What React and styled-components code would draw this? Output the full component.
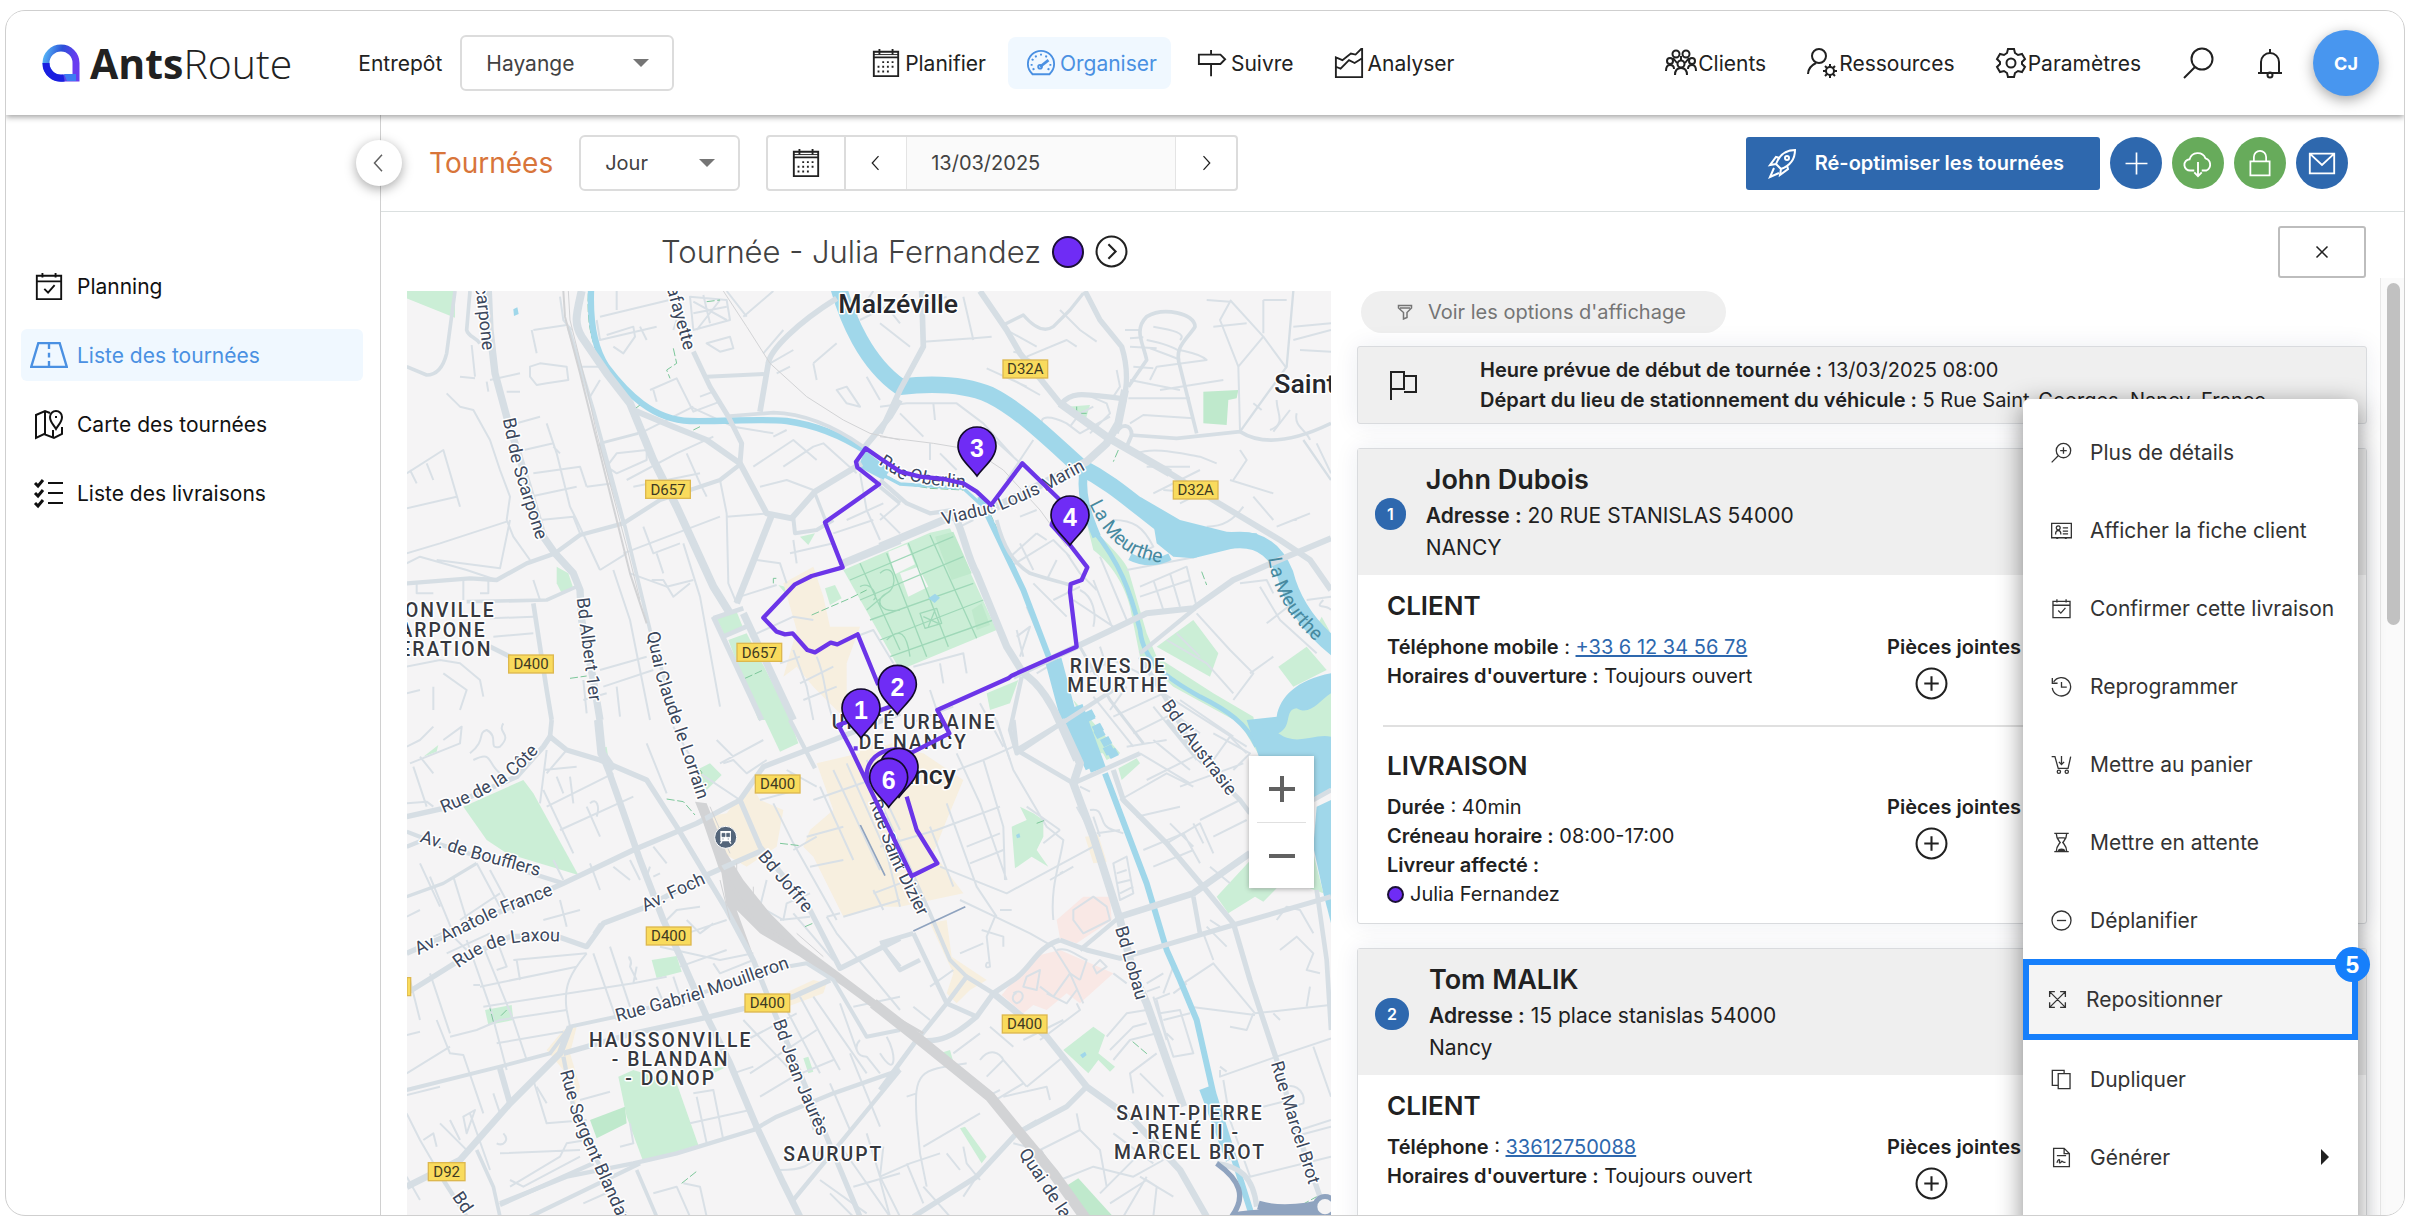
import React, { useState } from "react";
import styled, { createGlobalStyle } from "styled-components";

const GlobalStyle = createGlobalStyle`
  * {
    box-sizing: border-box;
  }
  body {
    margin: 0;
    background: #fff;
    color: #212121;
    font-family: Inter, "Open Sans", sans-serif;
    font-size: 20px;
  }
  button, input, select {
    font: inherit;
    color: inherit;
  }
  h1, h2, h3, h4, p, ul {
    margin: 0;
    padding: 0;
  }
  b {
    font-weight: 600;
  }
`;

/* ---------- icons ---------- */

const Svg = styled.svg`
  flex: none;
  width: ${(p) => p.$size || 32}px;
  height: ${(p) => p.$size || 32}px;
  fill: none;
  stroke: currentColor;
  stroke-width: ${(p) => p.$stroke || 2};
`;

const dots = (list) => list.map(([x, y]) => <path key={`${x}-${y}`} d={`M${x} ${y}h2`} />);

const shapes = {
  calendar: (
    <>
      <path d="M3 4h26v26H3zM3 10h26M9 1v6M23 1v6" />
      <path d="M3 7h26" strokeWidth="1" />
      {dots([
        [12, 15], [17, 15], [22, 15],
        [7, 20], [12, 20], [17, 20], [22, 20],
        [7, 25], [12, 25], [17, 25],
      ])}
    </>
  ),
  gauge: (
    <>
      <path d="M7 28h18c3-3 5-6 5-11a14 14 0 0 0-28 0c0 5 2 8 5 11z" />
      <path d="M15 20l9-7" strokeWidth="3" />
      <circle cx="15" cy="20" r="2" />
      <path d="M16 6v2M10 8l1 2M6 12l2 1M5 18h2M25 18h2M22 8l-1 2M7 23l2-1M25 23l-2-1" />
    </>
  ),
  sign: <path d="M2 7h23l5 5-5 5H2zM15 2v5M15 17v13" />,
  chart: <path d="M2 31V10l7 3 9-7 5 1 7-7v31zM2 20l5 2 9-9 6 3 8-5" />,
  clients: (
    <>
      <circle cx="11" cy="7" r="3.5" />
      <circle cx="21" cy="7" r="3.5" />
      <circle cx="5" cy="14" r="3" />
      <circle cx="27" cy="14" r="3" />
      <circle cx="16" cy="17" r="3.5" />
      <path d="M1 24c0-4 1-6 4-6s4 2 4 4M31 24c0-4-1-6-4-6s-4 2-4 4M10 28c0-5 2-7 6-7s6 2 6 7M8 11l4 5M24 11l-4 5M16 9v4" />
    </>
  ),
  resources: (
    <>
      <circle cx="13" cy="9" r="7" />
      <path d="M2 27c0-6 4-9 8-11" />
      <circle cx="24" cy="24" r="4" />
      <path d="M24 17v3M24 28v3M17 24h3M28 24h3M19 19l2 2M27 27l2 2M29 19l-2 2M21 27l-2 2" />
    </>
  ),
  gear: (
    <>
      <path d="M13 2h6l1 4 3 2 4-1 3 5-3 3v2l3 3-3 5-4-1-3 2-1 4h-6l-1-4-3-2-4 1-3-5 3-3v-2l-3-3 3-5 4 1 3-2z" />
      <circle cx="16" cy="16" r="4.5" />
    </>
  ),
  search: (
    <>
      <circle cx="19" cy="12" r="10.5" />
      <path d="M12 20L1 31" />
    </>
  ),
  bell: (
    <>
      <path d="M4 26h24M7 26V15a9 9 0 0 1 18 0v11M16 2v4" />
      <circle cx="16" cy="28" r="2.5" />
    </>
  ),
  left: <path d="M20 5L10 16l10 11" />,
  right: <path d="M12 5l10 11-10 11" />,
  rocket: (
    <>
      <path d="M10 17C13 9 19 3 29 3c0 10-6 16-14 19zM10 17l-6 1 6-8 4 1M15 22l-1 6 8-6-1-4" />
      <circle cx="21" cy="11" r="2" />
      <path d="M8 21l-4 9 9-4" />
    </>
  ),
  plus: <path d="M16 3v26M3 16h26" />,
  cloud: <path d="M12 24H8A6 6 0 0 1 7 12a9 9 0 0 1 17-1 7 7 0 0 1 1 13h-5M16 15v15M12 26l4 4 4-4" />,
  lock: <path d="M5 14h22v16H5zM9 14V9a7 7 0 0 1 14 0v5" />,
  mail: <path d="M3 6h26v21H3zM3 6l13 12L29 6" />,
  planning: <path d="M3 5h26v25H3zM3 11h26M9 2v5M23 2v5M11 19l4 4 7-8" />,
  road: <path d="M7 6h18l6 20H1zM16 6v5M16 14v4M16 21v5" />,
  mapPin: (
    <>
      <path d="M17 5l-5-2-9 4v23l8-4 10 4 8-4V19M12 4v22M20 22v8" />
      <path d="M23 21c-3-5-6-7-6-12a6 6 0 0 1 12 0c0 5-3 7-6 12z" />
      <path d="M22 9h2" />
    </>
  ),
  checklist: (
    <>
      <path d="M15 6h15M15 16h15M15 26h15" />
      <path d="M2 6l3 3 5-6M2 16l3 3 5-6M2 26l3 3 5-6" strokeWidth="3" />
    </>
  ),
  arrowCircle: (
    <>
      <circle cx="16" cy="16" r="14.5" />
      <path d="M13 9l7 7-7 7" />
    </>
  ),
  close: <path d="M5 5l22 22M27 5L5 27" />,
  funnel: <path d="M3 3h26v5l-9 9v10l-7 3V17L3 8zM6 8h20" />,
  flag: <path d="M4 31V3h13v17H4M17 7h12v16H17" />,
  plusCircle: (
    <>
      <circle cx="16" cy="16" r="14.5" />
      <path d="M16 9v14M9 16h14" />
    </>
  ),
  zoomIn: (
    <>
      <circle cx="19" cy="13" r="11" />
      <path d="M11 21L1 31M19 8v10M14 13h10" />
    </>
  ),
  card: <path d="M1 5h30v22H1zM7 22c0-8 8-8 8 0M18 12h8M18 17h8M18 21h8M8 28h3M21 28h3M11 9a3 3 0 1 0 .1 0z" />,
  history: <path d="M4 9a14 14 0 1 1-2 9M2 3v8h8M16 9v8h8" />,
  cart: (
    <>
      <path d="M1 4h5l5 18h15l4-18M16 3v12M12 12l4 4 4-4" />
      <circle cx="12" cy="27" r="2.5" />
      <circle cx="24" cy="27" r="2.5" />
    </>
  ),
  hourglass: (
    <>
      <path d="M5 2h22M5 30h22M8 2c0 8 3 10 6 14-3 4-6 6-6 14M24 2c0 8-3 10-6 14 3 4 6 6 6 14M11 9h10" />
      <path d="M11 29c1-4 9-4 10 0z" fill="currentColor" />
    </>
  ),
  minusCircle: (
    <>
      <circle cx="16" cy="16" r="14.5" />
      <path d="M9 16h14" />
    </>
  ),
  move: <path d="M4 4l24 24M28 4L4 28M4 12V4h8M20 4h8v8M28 20v8h-8M12 28H4v-8" />,
  copy: <path d="M11 7h18v23H11zM11 25H2V2h18v5" />,
  file: <path d="M4 2h16l8 8v20H4zM20 2v8h8M9 13h14M9 24c2-6 5-6 4-2s2 2 3 0 2 3 6 1" />,
};

const Icon = ({ name, size, stroke }) => (
  <Svg viewBox="0 0 32 32" $size={size} $stroke={stroke} aria-hidden="true">
    {shapes[name]}
  </Svg>
);

/* ---------- frame ---------- */

const Frame = styled.div`
  display: flex;
  flex-direction: column;
  height: calc(100vh - 20px);
  margin: 10px 5px;
  border: 1px solid #cfcfcf;
  border-radius: 20px;
  overflow: hidden;
`;

const Header = styled.header`
  display: flex;
  align-items: center;
  justify-content: space-between;
  flex: none;
  height: 104px;
  padding: 0 25px 0 36px;
  background: #fff;
  font-size: 21px;
  box-shadow: 0 2px 6px rgba(0, 0, 0, 0.38);
  z-index: 3;
`;

const Group = styled.div`
  display: flex;
  align-items: center;
  gap: ${(p) => p.$gap || 0}px;
`;

const Logo = styled.a`
  display: flex;
  align-items: center;
  gap: 10px;
  margin-right: 66px;
  color: #212121;
  font-family: "Open Sans", sans-serif;
  font-size: 41px;
  font-weight: 300;
  line-height: 40px;
  text-decoration: none;

  b {
    font-weight: 700;
  }
  svg {
    width: 38px;
    height: 38px;
  }
`;

const SelectLabel = styled.label`
  margin-right: 18px;
`;

const SelectBox = styled.div`
  position: relative;
  width: ${(p) => p.$width}px;

  &::after {
    content: "";
    position: absolute;
    top: 24px;
    right: 25px;
    border: 8px solid transparent;
    border-top-color: #757575;
    border-bottom: 0;
    pointer-events: none;
  }
`;

const Select = styled.select`
  appearance: none;
  width: 100%;
  height: 56px;
  padding: 0 24px;
  border: 2px solid #dcdcdc;
  border-radius: 6px;
  background: #fff;
  color: #424242;
`;

const NavLink = styled.a`
  display: flex;
  align-items: center;
  gap: ${(p) => (p.$tight ? 1 : 4)}px;
  height: 52px;
  padding: 0 14px 0 18px;
  border-radius: 8px;
  background: ${(p) => (p.$active ? "#f0f8ff" : "transparent")};
  color: ${(p) => (p.$active ? "#4a90e2" : "#212121")};
  text-decoration: none;
`;

const IconButton = styled.button`
  display: flex;
  align-items: center;
  justify-content: center;
  padding: 0;
  border: 0;
  background: none;
  cursor: pointer;
`;

const HeaderTools = styled(Group)`
  margin: 0 27px 0 28px;
`;

const Avatar = styled.button`
  width: 66px;
  height: 66px;
  border: 0;
  border-radius: 50%;
  background: #4896ef;
  color: #fff;
  font-size: 18px;
  font-weight: 700;
  box-shadow: 0 4px 14px rgba(0, 0, 0, 0.35);
`;

const Body = styled.div`
  display: flex;
  flex: 1;
  min-height: 0;
`;

const Sidebar = styled.nav`
  display: flex;
  flex-direction: column;
  flex: none;
  gap: 17px;
  width: 375px;
  padding: 145px 17px 0 15px;
  border-right: 1px solid #d0d0d0;
  font-size: 21px;
`;

const SideLink = styled.a`
  display: flex;
  align-items: center;
  gap: 9px;
  height: 52px;
  padding-left: 9px;
  border-radius: 6px;
  background: ${(p) => (p.$active ? "#f0f8ff" : "transparent")};
  color: ${(p) => (p.$active ? "#4a90e2" : "#111")};
  text-decoration: none;
`;

const SideIcon = styled.span`
  display: flex;
  justify-content: center;
  width: 38px;
`;

/* ---------- toolbar ---------- */

const Main = styled.main`
  position: relative;
  display: flex;
  flex: 1;
  flex-direction: column;
  min-width: 0;
`;

const Collapse = styled(IconButton)`
  position: absolute;
  top: 25px;
  left: -25px;
  width: 46px;
  height: 46px;
  border-radius: 50%;
  background: #fff;
  color: #616161;
  box-shadow: 0 3px 12px rgba(0, 0, 0, 0.35);
  z-index: 2;
`;

const Toolbar = styled.div`
  display: flex;
  align-items: center;
  justify-content: space-between;
  flex: none;
  height: 97px;
  padding: 0 56px 0 48px;
  border-bottom: 1px solid #dbe0e0;
`;

const PageTitle = styled.h1`
  color: #d8753a;
  font-size: 28px;
  font-weight: 400;
`;

const DateGroup = styled.div`
  display: flex;
  height: 56px;
  border: 2px solid #dcdcdc;
  border-radius: 4px;
  overflow: hidden;

  button {
    width: 60px;
  }
  button:first-child {
    width: 78px;
    border-right: 2px solid #dcdcdc;
  }
`;

const DateInput = styled.input`
  width: 270px;
  padding: 0 24px;
  border: solid #e4e4e4;
  border-width: 0 1px;
  background: #fafafa;
  color: #424242;
`;

const Primary = styled.button`
  display: flex;
  align-items: center;
  gap: 17px;
  height: 53px;
  padding: 0 36px 0 20px;
  border: 0;
  border-radius: 3px;
  background: #2e68ae;
  color: #fff;
  font-weight: 600;
`;

const Round = styled(IconButton)`
  width: 52px;
  height: 52px;
  border-radius: 50%;
  background: ${(p) => (p.$green ? "#67ab5b" : "#2e68ae")};
  color: #fff;
`;

/* ---------- route view ---------- */

const RouteView = styled.section`
  position: relative;
  display: flex;
  flex: 1;
  flex-direction: column;
  min-height: 0;
`;

const RouteHead = styled.div`
  display: flex;
  align-items: center;
  justify-content: space-between;
  flex: none;
  height: 66px;
  padding: 13px 38px 0 280px;
`;

const RouteTitle = styled.h2`
  color: #424242;
  font-size: 31px;
  font-weight: 300;
`;

const Dot = styled.span`
  display: inline-block;
  flex: none;
  width: ${(p) => p.$size}px;
  height: ${(p) => p.$size}px;
  border: 2px solid #1b1036;
  border-radius: 50%;
  background: #6f2cf5;
`;

const Close = styled(IconButton)`
  width: 88px;
  height: 52px;
  border: 2px solid #bdbdbd;
  border-radius: 3px;
`;

const Split = styled.div`
  display: grid;
  flex: 1;
  grid-template-columns: 924fr 1049fr 24px;
  min-height: 0;
  padding-left: 26px;
`;

const MapPane = styled.div`
  position: relative;
  min-height: 0;
  margin-top: 13px;
  background: #f5f4f5;
  overflow: hidden;

  > svg {
    display: block;
    width: 100%;
    height: 100%;
  }
`;

const ZoomControl = styled.div`
  position: absolute;
  right: 17px;
  bottom: 327px;
  display: flex;
  flex-direction: column;
  width: 65px;
  padding: 0 8px;
  background: #fff;
  color: #616161;
  box-shadow: 0 1px 5px rgba(0, 0, 0, 0.3);

  button {
    height: 66px;
  }
  button + button {
    border-top: 1px solid #e0e0e0;
  }
`;

const List = styled.div`
  display: flex;
  flex-direction: column;
  min-height: 0;
  padding: 13px 13px 0 26px;
  overflow: hidden;
`;

const Options = styled.button`
  display: flex;
  align-items: center;
  align-self: flex-start;
  flex: none;
  gap: 15px;
  height: 42px;
  margin: 0 0 13px 4px;
  padding: 0 40px 0 36px;
  border: 0;
  border-radius: 21px;
  background: #efefef;
  color: #757575;
`;

const Card = styled.article`
  flex: none;
  margin-bottom: 24px;
  border: 1px solid #d9dbde;
  border-radius: 3px;
  background: #fff;
  box-shadow: 0 0 24px rgba(30, 40, 90, 0.08);
`;

const Departure = styled(Card)`
  display: flex;
  align-items: center;
  gap: 61px;
  height: 78px;
  padding-left: 29px;
  background: #efefef;
  line-height: 30px;
  white-space: nowrap;
`;

const CardHead = styled.header`
  display: flex;
  align-items: center;
  gap: 20px;
  height: 126px;
  padding: 3px 17px 0;
  background: #efefef;
`;

const Badge = styled.span`
  flex: none;
  padding: 0 12px;
  border-radius: 16px;
  background: #2e68ae;
  color: #fff;
  font-size: 16px;
  font-weight: 600;
  line-height: 32px;
`;

const Name = styled.h3`
  margin-bottom: 3px;
  font-size: 27px;
  font-weight: 600;
  line-height: 34px;
`;

const Address = styled.p`
  width: 400px;
  font-size: 21px;
  line-height: 32px;
`;

const CardBody = styled.div`
  padding: 0 25px;
`;

const Section = styled.section`
  padding: ${(p) => (p.$first ? "14px 4px 25px" : "22px 4px 14px")};

  & + & {
    border-top: 2px solid #e0e0e0;
  }
`;

const SectionTitle = styled.h4`
  font-size: 26px;
  font-weight: 600;
  line-height: 34px;
`;

const Columns = styled.div`
  display: grid;
  grid-template-columns: 500px 1fr;
  margin-top: 10px;
  line-height: 29px;

  a {
    color: #2e68ae;
  }
`;

const Driver = styled.p`
  display: flex;
  align-items: center;
  gap: 6px;
`;

const AddFile = styled(IconButton)`
  margin: 5px 0 0 28px;
`;

const Track = styled.div`
  padding: 5px 4px 0 6px;
  border-left: 1px solid #e8e8e8;
  background: #fafafa;

  &::before {
    content: "";
    display: block;
    height: 342px;
    border-radius: 7px;
    background: #c1c1c1;
  }
`;

const Menu = styled.ul`
  position: absolute;
  top: 187px;
  right: 46px;
  width: 335px;
  padding: 14px 0 44px;
  border-radius: 6px;
  background: #fff;
  font-size: 21px;
  box-shadow: 0 6px 26px rgba(0, 0, 0, 0.45);
  list-style: none;
`;

const MenuItem = styled.li`
  position: relative;
  height: ${(p) => (p.$marked ? 81 : 78)}px;

  button {
    display: flex;
    align-items: center;
    gap: 18px;
    width: 100%;
    height: 100%;
    padding: 0 ${(p) => (p.$more ? 29 : 12)}px 0 ${(p) => (p.$marked ? 18 : 28)}px;
    border: ${(p) => (p.$marked ? "6px solid #167ffb" : "0")};
    background: ${(p) => (p.$marked ? "#f4f4f4" : "none")};
    color: #333;
    text-align: left;
    white-space: nowrap;
  }
`;

const Caret = styled.span`
  margin-left: auto;
  border: 8px solid transparent;
  border-left-color: #212121;
  border-right: 0;
`;

const Step = styled.span`
  position: absolute;
  top: -12px;
  right: -12px;
  width: 35px;
  border-radius: 50%;
  background: #167ffb;
  color: #fff;
  font-family: "Liberation Sans", sans-serif;
  font-size: 24px;
  font-weight: 700;
  line-height: 35px;
  text-align: center;
`;

/* ---------- map ---------- */

// The map is drawn from four tiles, each with its own origin in map units.
const tiles = [
  {
    at: [-21, -213],
    parks: [
      "M20 213h145v80L20 235z",
      "M470 1040l35 20 15 45-35 15-15-30z",
      "M950 1195l60-20 20 50-55 25z",
      "M985 1260l55-20 135 260h-100z",
      "M1275 1105l30-10 20 40-35 20z",
      "M1135 1095l20 5 10 30z",
      "M1200 950l45-10-20 35z",
    ],
    shops: ["M1150 1090l90-50 30 90 20 90 90 0-40 110 0 170-100-100-50-60-40 30 40-140z"],
    water: [["M573 213C570 300 580 380 620 440C680 520 760 600 870 603C980 605 1080 595 1160 603C1250 615 1330 650 1400 695", 19]],
    lakes: ["M1395 690l75 60-20 30-75-40z", "M340 268l12-6 4 20-14 6z"],
    roads: [
      ["M265 213L270 330L285 460L320 590L370 750L430 950L465 1000L520 1060L540 1110L545 1200L580 1380L600 1500", 22],
      ["M545 213C530 280 520 310 545 350L620 460L690 550L760 720L830 860L940 1100L990 1180", 24],
      ["M940 1190L1085 1500", 16],
      ["M1030 1180L1180 1500", 22],
      ["M940 1195L1030 1165M970 1250L1050 1215", 14],
      ["M505 320L580 570L675 920L750 1230L830 1500", 11],
      ["M700 570L820 620L920 660L1020 730L1100 880L1175 895L1245 815L1385 730", 18],
      ["M1115 885L1010 1150", 20],
      ["M880 395L930 500L985 590L1025 670L1020 730", 15],
      ["M990 588L1120 578C1200 580 1290 610 1390 680", 11],
      ["M1080 575L1105 430C1110 390 1190 310 1310 235", 17],
      ["M920 470L1100 462", 12],
      ["M1025 730L960 780L870 810L780 840L670 910L540 945L465 1000L380 1030L290 1080L210 1075L20 1090", 13],
      ["M200 1145L440 1140L530 1100", 11],
      ["M1180 895L1185 940L1250 930L1300 900", 12],
      ["M1245 820L1280 910", 10],
      ["M1330 1030L1500 960", 24],
      ["M1395 680L1470 590L1500 540", 18],
      ["M165 213L140 400C130 440 110 465 80 465L20 440", 11],
      ["M210 213L200 330C205 350 225 350 240 370", 11],
      ["M400 1150L440 1410L455 1500M270 1280L330 1310", 14],
      ["M600 670L715 640M600 670L670 910", 9],
      ["M1500 850L1440 800", 12],
    ],
    lanes: [
      "M480 230L490 300L515 330M600 290L830 235M590 300L600 360L770 320M620 345L700 320L705 350L670 400L640 380M720 320L740 360M650 213V270M395 330L410 400M400 330L500 315",
      "M215 375L225 470M270 480L360 460M180 470L225 475M265 515L260 485M320 515H360M390 440L420 430L500 440L505 480L440 490L410 495L390 470z",
      "M140 520L180 560L220 570L270 660L300 750L330 830L320 900L340 950L390 1020M20 760L130 690L180 860M30 750L50 790M80 730L100 780M20 865L170 830M20 1000L120 970L320 905M20 1030L60 1010L200 1050L290 1080M110 1020L300 1045L330 900",
      "M350 610L420 590M330 700L460 670M400 760L540 740L560 800M390 830L530 800M440 610L470 700L510 860L530 900L600 1050M460 680L480 700M420 900L520 890L540 940M600 480L570 530M540 440L600 440",
      "M620 740L650 700L740 690L740 720L650 760zM680 780L830 700L940 650M700 800L900 760M860 700L900 790L920 830M750 510L830 475L880 575L960 545M760 510L770 545M900 530L940 515",
      "M820 330L830 300M920 370L990 350L1000 385L960 395zM1030 290L1120 213M1090 400L1150 330M1110 430L1180 390M1240 430L1310 370M1240 430L1250 480M1310 510L1340 500L1380 560L1340 550zM1130 460L1170 440M1400 470L1440 540",
      "M1060 740L1180 660L1250 720M1150 740L1240 680L1270 670L1370 760M1080 800L1160 780L1240 810M1120 650L1160 630M980 890L1110 880M960 780L980 880L985 1090L1010 1150M670 1000L960 890M640 1050L690 1200L750 1500M600 1050L680 1000M850 970L900 1130L960 1460",
      "M1070 1020L1140 1030L1160 1090M1170 1000L1300 970M1180 960L1190 1030M1340 900L1450 850M1380 760L1400 870L1440 960M1300 940L1420 900M1020 1130L1130 1095M1050 1250L1180 1190L1240 1200M770 1000L790 1060M755 1080L790 1080L820 1130L870 1090",
      "M20 1340L120 1320L180 1330L240 1380L250 1430M130 1360L200 1410L180 1470M100 1400V1470M20 1420L60 1410M270 1195L400 1190M280 1250L400 1240M550 1440L620 1420M600 1350L740 1310M610 1400L760 1350M550 1380L560 1480M650 1400L660 1490",
      "M1250 1310C1280 1380 1270 1420 1300 1500M1180 1290L1220 1400L1240 1500M1200 1390L1300 1340M1210 1440L1310 1400M1140 1330L1200 1310M1380 1245L1420 1230L1480 1330M50 1090V1120H100M190 1075V1140M265 1080V1120H240",
      "M1360 300L1420 213M1380 300L1460 260L1500 310M980 213L1040 290M870 230L880 330L990 300L980 240zM880 280L980 260M910 225L930 310M890 330L960 240M880 245L980 300",
      "M720 640L880 560M560 800L640 790M400 1080L420 1140M730 920L760 1000L840 970M690 1060L800 1100L880 1080M870 560L1000 620L1120 640",
    ],
    trails: ["M565 220C560 330 580 400 640 480C720 570 800 610 990 610M820 385L830 430L800 450L810 475M1235 1185L1350 1135L1400 1110M1035 1375L1090 1350M510 1375L560 1368M920 245L960 240M720 555L700 570M900 620L880 630M1120 1090L1120 1075L1130 1075"],
    rails: [["M490 213L495 290L540 460L575 600L640 860L690 1060L740 1210", 6], ["M505 213L510 300L560 500L590 640L680 980L720 1140", 3], ["M970 213L1040 320L1110 430L1220 530L1330 600L1410 640L1500 660", 3]],
    shields: [["D657", 804, 808], ["D400", 393, 1332], ["D657", 1078, 1297]],
    streets: [
      ["carpone", "M226 198L252 430"],
      ["afayette", "M800 205L860 420"],
      ["Bd de Scarpone", "M308 598L338 740L412 970L450 1080"],
      ["Bd Albert 1er", "M530 1135L545 1260L575 1500"],
    ],
    areas: [["ONVILLE", 287, 1190, "end"], ["ARPONE", 260, 1250, "end"], ["ERATION", 277, 1308, "end"]],
  },
  {
    at: [1419, -33],
    parks: [
      "M-110 870L150 758L210 745L350 1050L60 1170z",
      "M560 380l70-5-15 50z",
      "M940 1020l75 100-25 70-160-90z",
      "M1195 1160l85-60 60 70-100 50z",
      "M320 1240l95-40-25 70-60 20z",
      "M620 730C650 760 730 830 745 870L800 1060L830 1130L1000 1240L1120 1310L1140 1430L1080 1330L880 1220L780 1130L750 980C730 900 680 840 640 810z",
      "M1310 1040l15-30 25 45z",
      "M580 1260L720 1420H650z",
    ],
    woods: ["M970 335l105-5-5 25-25 5-5 75-70-5z", "M165 770l55-15 55 125-60 20z", "M275 990l30-20 25 65-40 15z"],
    plain: ["M25 815l55-22 25 60-60 30z", "M60 880l55-20 30 60-60 30z"],
    water: [
      ["M-130 0C-100 120 -40 250 60 320C150 310 250 310 330 345C420 390 500 470 600 560C700 610 760 670 880 760C940 800 1000 780 1080 780C1150 780 1190 820 1215 880C1240 980 1300 1060 1400 1130", 50],
      ["M612 570C600 640 620 700 650 770", 26],
      ["M640 750C720 850 750 930 780 1050C790 1150 870 1200 960 1250C1040 1290 1100 1330 1130 1400", 14],
      ["M870 830C830 850 790 850 750 830", 22],
      ["M300 650L325 710L430 930L510 1140", 18],
      ["M-30 565L60 612L150 618L250 625L310 680", 10],
      ["M520 1140L560 1290L640 1460", 50],
    ],
    lakes: [
      "M780 650L900 720L1040 755L1130 760L1160 810L1080 800L940 835L880 830L830 790L820 730z",
      "M1353 1180C1250 1200 1200 1250 1190 1310L1100 1320L1140 1440H1353z",
      "M610 1300l25-12 12 22-25 12zM635 1340l25-12 12 22-25 12zM660 1380l25-12 12 22-25 12zM680 1415l25-12 12 22-25 12z",
      "M145 955l20-14 15 12-16 16z",
    ],
    islands: ["M1195 1360C1240 1340 1210 1290 1250 1285C1290 1310 1320 1260 1353 1240V1370C1300 1360 1250 1400 1195 1360z"],
    roads: [
      ["M300 33L380 150L420 220L540 370L680 470L870 580L1000 660L1200 780L1290 840L1353 930", 18],
      ["M540 370L680 470L870 580", 24],
      ["M615 33L660 120L725 200C750 280 740 340 715 430L690 480", 16],
      ["M735 330L715 430L680 490L620 545L350 680L210 712L0 800", 24],
      ["M545 370C580 330 620 345 720 355", 16],
      ["M740 500L755 465C755 430 720 430 710 460", 12],
      ["M750 465L890 475L1080 455C1150 500 1250 480 1353 430", 11],
      ["M950 460L900 260C880 200 920 180 945 140C945 100 850 80 800 110C760 150 790 190 800 240L745 320", 11],
      ["M370 135L430 105C460 140 490 160 520 140L570 90L610 40", 10],
      ["M220 700C250 750 260 830 290 880L380 1100L430 1180C480 1210 520 1280 540 1330L590 1440", 22],
      ["M400 1190L600 1095L800 1000L940 985L1060 900L1220 830L1353 775", 18],
      ["M945 985L780 1120", 13],
      ["M0 600L80 670L150 700L220 690", 13],
      ["M350 720C370 800 400 850 450 880C510 900 540 905 570 915", 11],
      ["M425 1190L390 1350L410 1420L530 1340L700 1230", 13],
      ["M780 1130L860 1260L960 1440", 14],
      ["M0 460L60 330L130 200L125 33", 17],
      ["M1270 480L1353 600M1080 455L1220 260L1240 33", 7],
      ["M600 1100L690 1260L790 1390", 9],
    ],
    lanes: [
      "M0 130L90 200M130 185L280 175L335 170M280 180L250 50M200 50L120 80M380 150L470 200M440 230L560 180L590 200M320 265L440 320M420 220L400 215M400 300L480 345M540 90L600 150L650 185M710 270L720 320L700 350",
      "M735 150H780M750 175L790 172M750 200L830 205M760 260L820 265M750 300L900 330M745 355L930 355M820 140C880 150 920 160 900 180M800 180C850 190 880 200 900 215M810 205C850 220 880 230 900 240M810 300L830 260L980 240C960 220 920 215 900 210M840 330L1030 300M750 430L790 405L940 415",
      "M980 60L1050 65L1020 120L1075 260L1080 450M1050 60L1150 170L1075 260M1150 170L1220 265M1150 60H1220M1150 60V160M1240 140L1353 130M1260 210L1353 215M1120 370L1145 390M1170 450C1220 430 1190 400 1190 360M1250 400C1240 440 1280 450 1290 480M1310 490L1353 580",
      "M490 440C470 400 520 410 560 430L600 460L690 410M570 440L600 400L640 380M630 460L690 400L680 370L610 340M0 380L80 370L230 370L310 430L400 530M160 370L165 420M60 400L130 470M150 490V540M180 520L230 570M380 600L460 480M300 440L520 640",
      "M770 520C820 500 900 520 960 530L1010 550M800 560L930 560M820 640L900 600L960 570M850 630L970 640M900 670L1000 620M980 740C1030 740 1060 720 1090 680M1120 650L1180 720M1190 740L1240 720L1290 700M1060 600L1100 540L1080 510M1050 600L1180 640M1280 960L1353 950M1330 960C1300 990 1340 970 1353 990",
      "M700 720C760 720 790 740 820 800L800 810M740 870L950 830M780 920L920 860L950 980M780 950L930 900M820 900L850 990M870 880L900 980M1160 1030L1250 960M1140 920L1200 1020L1310 1120M1110 1180L1180 1130M1080 910L1160 900L1180 940M950 1000L1050 1110L1120 1180L1060 1260",
      "M380 840L470 760M390 860L520 780L570 830M470 760L500 780M420 790L460 870M500 900L530 840M520 960L600 920M560 820L600 880L650 930M460 910L560 1010M600 930C640 950 650 1000 640 1040M640 900L700 1050M660 830L740 1020M420 1130L450 1040L410 1070M580 960L700 1040",
      "M410 1050L430 1130M100 1160L250 1120L260 1180M180 1150L190 1210M150 1230L170 1290M300 1270L370 1400M340 1300L390 1440M620 1180L700 1140L780 1180M700 1310L850 1240L1100 1400M760 1360L880 1300L960 1360M640 1250L760 1400M820 1280L950 1440M900 1260L1060 1370M1000 1440L1050 1370L1100 1420",
      "M480 260L420 220M1240 180L1353 150M1180 455L1230 390M0 700L60 760M60 670L0 720M90 1330L220 1280M420 710L470 690M240 740L280 720M1000 140L1100 130M1240 720h10",
      "M440 980L470 1050M540 1230L580 1180M470 1180L520 1150M660 1100L680 1160M740 1220L690 1290M860 1080L980 1150L1060 1240M890 1060L960 1130",
    ],
    paths: ["M-60 850L60 1110M20 820L140 1130M85 790L205 1100M150 765L290 1075M-90 900L220 770M-60 960L250 830M-30 1020L280 910M0 1080L310 960M30 1130L340 1020M0 880C40 840 60 920 20 940S0 1000 60 990M-40 990L20 940M-60 920C-30 900 0 950 -20 960M20 1080C60 1040 80 1060 90 1130M120 1000L170 985L185 1030L135 1045zM130 1010L175 1030M145 1040L165 990"],
    trails: ["M330 700L420 900L500 1120M0 575L60 610L150 625L250 630M965 875L980 915M715 510L700 545M590 380V400L620 400"],
    rails: [["M0 470L160 490L280 510L370 570L480 690L560 800", 3]],
    shields: [["D32A", 436, 267], ["D32A", 947, 630]],
    streets: [
      ["Rue Oberlin", "M-5 552L60 595L150 615L330 630"],
      ["Viaduc Louis Marin", "M190 735L350 697L500 632L680 535"],
      ["La Meurthe", "M628 672C680 780 740 850 900 852", "#46899f"],
      ["La Meurthe", "M1165 835C1180 940 1230 1030 1360 1130", "#46899f"],
    ],
    areas: [["RIVES DE", 715, 1178], ["MEURTHE", 715, 1236], ["UNITÉ URBAINE", 103, 1348], ["DE NANCY", 100, 1406]],
    towns: [["Malzéville", -125, 99], ["Saint", 1183, 340]],
  },
  {
    at: [-21, 1287],
    parks: [
      "M190 260L370 180L400 220L535 465L320 400L260 360z",
      "M1095 0h75l25 70-55 25z",
      "M755 720l75-12 15 47-75 20z",
      "M255 870l80-15 5 45-75 15z",
      "M655 1070L700 1050L830 1090L895 1275L730 1325L680 1190z",
      "M890 150l40-20 35 35-45 45z",
      "M70 110l45-35-5 20z",
      "M1210 1015l15-5 15 45-15 5z",
      "M605 85l15-5 5 35-15 5z",
      "M940 1045L980 1040L940 1060z",
    ],
    woods: ["M570 1200l105-40 5 50-90 45z"],
    shops: [
      "M1250 130L1420 90L1500 60V540L1330 590L1240 410L1210 380L1230 330L1300 270z",
      "M920 290L980 280L1050 190L1080 240L1150 270L1130 380L1040 440L970 400z",
      "M1090 850L1240 780L1280 790L1270 820L1110 880z",
      "M440 990L490 930L530 920L510 1000L540 1100L520 1180L490 1050z",
    ],
    roads: [
      ["M595 0L605 100L625 150L650 220L720 420L790 600L850 730L920 890L990 1030L1070 1220L1150 1390L1200 1490", 20],
      ["M595 0L605 100L640 150", 26],
      ["M20 290L130 265L350 170L430 80L450 50L500 90L600 120L740 180L830 320L920 470L980 570L1060 720L1120 870L1200 1060L1280 1250L1380 1490", 16],
      ["M455 0L450 50", 14],
      ["M20 700L200 620L490 490L700 390L890 310L1020 240L1090 140L1300 60L1500 -20", 16],
      ["M20 335L110 370L300 430L490 490M20 380L70 360M1170 0L1245 145", 13],
      ["M20 530L130 490L230 430", 10],
      ["M20 820L180 720L330 650L460 645L560 680L610 610L740 560L920 465L1090 390", 16],
      ["M1020 240L1080 380L1230 570L1320 745L1500 655", 16],
      ["M20 1110L300 1040L450 1000L510 920L650 890L900 820L1160 740L1220 730L1300 780L1400 950L1500 930", 12],
      ["M490 1000L700 940L930 890L1180 830L1290 780", 16],
      ["M510 920L480 1000L330 1150L180 1320L20 1400", 20],
      ["M300 1045L330 1150", 18],
      ["M300 1450L500 1370L700 1330L830 1300L1060 1230L1130 1190L1300 1120L1500 1050", 13],
      ["M300 1455L580 1330M390 1490L720 1330M1180 1440L1320 1270L1500 1050", 13],
      ["M230 1290L280 1400L300 1490M710 1350L770 1490", 11],
      ["M130 1380L200 1490", 13],
      ["M490 1010L500 1060L520 1160L590 1320L680 1490", 13],
      ["M1450 680L1500 740", 12],
    ],
    lanes: [
      "M20 80L60 60L100 20M30 130L180 70L185 20L130 60M40 140L80 260M20 250L80 245L100 260M60 110L100 160M210 100C260 60 230 40 260 30C300 50 260 90 300 80C340 40 290 40 310 10M220 120C280 90 260 130 300 160",
      "M440 90L420 250M430 150L530 140M470 170L490 220M510 170L520 250M560 260L600 350M570 250C590 230 600 260 590 290M440 260L640 160M480 330L700 230M430 210L520 400M500 90L440 160M460 420L490 480",
      "M60 430L120 560M90 470L160 640M160 470L200 600M230 430L300 560M270 450L340 580M100 650L170 620M180 600L300 520M200 660L270 860L320 1050M250 680L340 900L380 1020M290 660L320 740L290 750M150 640L200 690",
      "M20 590L60 570M140 700L270 640M340 720L560 700M350 720L360 780M240 800L530 740M250 860L700 790L800 770M30 780L60 900M90 760L150 940M110 900L150 1000L190 1005L250 1180M150 950L230 930L300 900L500 870M290 970L490 935M20 945L60 935M220 795H240",
      "M560 700C510 760 490 800 500 870L510 920M580 700L650 900M630 680L690 860M640 440L690 480M570 430L600 510M690 420L720 480M760 380L800 430M750 440L740 470M760 470L780 460M430 600L540 570M600 610L580 640M480 540L500 620",
      "M860 600L900 640L940 610M690 720C680 700 700 720 690 740L710 780M710 740L700 790M800 600L830 570L900 560M780 680L960 720L1060 700M840 740L980 690M860 640L980 600M940 730L960 760L1060 720M770 800L800 870M820 770L850 860",
      "M1100 480L1080 560L1150 600L1160 550L1230 520M1140 600L1230 590M1180 580L1300 720M1280 590L1310 640L1500 870M1280 590L1320 580M1180 160L1100 190M1160 150L1250 200M1240 240L1500 150M1080 240L1190 210M1120 250L1180 370L1310 600M1220 350L1330 320M1230 440L1330 420M1180 390L1250 350",
      "M1340 130L1460 400L1500 560M1300 150L1440 450M1400 120L1500 330M1260 200L1360 420M1330 590L1500 540M1420 510L1450 570M1420 520L1500 490M970 130L1000 120L1040 160L1100 120M1090 60L960 130M950 60L1000 110M820 20L900 160L1020 240M740 70L800 220",
      "M1030 900L1180 1060M1040 960L1190 880M1050 1060L1250 930M1080 1130L1180 1070L1300 1020M1160 870L1260 1060M1200 830L1320 1050M1240 830L1400 1060M1290 1090L1350 1230M1350 1000L1440 1220M1380 960C1360 980 1370 1010 1400 1010L1440 1060M1320 850L1370 990M1360 860L1500 830",
      "M880 1120L940 1110L970 1260M890 1130L920 1270M870 1210L1050 1170M1000 1060L1060 1040M540 1140L630 1115M560 1260L500 1270L480 1310L330 1400M330 1380L370 1400L540 1310M300 1300L540 1290M310 1240C330 1260 310 1280 290 1270M660 1280L700 1270L690 1210M400 1080L440 1210L560 1200",
      "M150 1200L180 1260M120 1210L210 1300M190 1190L225 1170L200 1240zM210 1180L270 1350M20 1180L60 1260L130 1380M20 1125L120 1100M70 1260L100 1240L110 1280M20 1060L150 980M280 1120L300 1180M410 1100L440 1150M20 1370L60 1440",
      "M760 1420L830 1400L870 1490M850 1390L900 1400L920 1490M550 1450L640 1410M1210 1100L1240 1230M1140 1350C1200 1350 1240 1340 1260 1290M1330 1290L1470 1490M1360 1400L1500 1360M1290 1420L1360 1490M1400 1240L1440 1370L1500 1490M1260 1380L1400 1480M1450 1280L1440 1370",
    ],
    trails: ["M800 237L850 245L885 285M1140 370L1200 377M1215 620L1245 607M845 1390L895 1350M280 905L270 865M320 870L300 890M900 150C910 160 905 165 895 160"],
    yards: ["M885 245L920 250L980 400L1030 480L1110 580L1200 670L1320 760L1500 895V925L1330 800L1200 710L1080 640L1010 570L1065 720L1050 718L980 560L960 430z"],
    rails: [["M895 250L960 440L1060 600L1210 690L1330 780L1500 910", 10], ["M930 260L990 400M1010 430L1010 560M960 480L990 600M1060 500V560M1190 640L1270 710", 3]],
    shields: [["D400", 1133, 192], ["D400", 806, 648], ["D400", 1102, 849], ["D92", 140, 1355]],
    streets: [
      ["Quai Claude le Lorrain", "M740 -262L768 -130L812 0L850 110L910 290"],
      ["Rue de la Côte", "M130 280C250 230 350 190 450 50"],
      ["Av. de Boufflers", "M58 365L200 410L460 480"],
      ["Av. Anatole France", "M55 705L290 590L520 500"],
      ["Rue de Laxou", "M175 745C260 680 340 650 520 668"],
      ["Av. Foch", "M735 575L960 470"],
      ["Bd Joffre", "M1072 410L1260 635"],
      ["Rue Gabriel Mouilleron", "M652 905L900 838L1220 725"],
      ["Bd Jean Jaurès", "M1118 905L1180 1080L1290 1330"],
      ["Rue Sergent Blandan", "M480 1055L520 1200L600 1380L700 1600"],
      ["Bd", "M155 1430L230 1540"],
    ],
    areas: [["HAUSSONVILLE", 812, 980], ["- BLANDAN", 812, 1038], ["- DONOP", 812, 1096], ["SAURUPT", 1300, 1322]],
  },
  {
    at: [1419, 1287],
    parks: [
      "M395 320L440 300L420 260L460 280L490 300V350L470 390L505 440L455 410L405 445z",
      "M715 145l55-30 10 15-55 50z",
      "M1010 530L1107 425V505H1190L1150 545L1125 530L1045 580z",
      "M550 990L640 920L675 945L655 1000L705 1040L690 1055L655 1020L625 1060z",
      "M180 1000l30-10 10 35z",
      "M240 1225l15-5 65 90-15 20z",
      "M1305 150l15 30-10 60zM1300 400L1330 520L1290 505z",
      "M580 -60L720 100L680 120z",
      "M1070 0H1140V60z",
    ],
    woods: ["M555 1400l40-25 100 110h-85z"],
    shops: [
      "M-60 60L130 100L250 180L200 300L160 400L250 520L60 560L-60 560z",
      "M150 610l50-10 15 110 105 70-50 30-40 40-30-30 20-60z",
      "M615 350l40-5 25 80-40 5z",
    ],
    clinics: ["M530 600L610 530L690 530L695 600L590 670L540 655z", "M365 825L460 710L540 690L700 760L600 850L560 820L500 870L460 855L430 880z"],
    water: [
      ["M585 -40L655 150", 48],
      ["M675 160L800 490L860 690L900 780L950 900L1000 1120L1060 1310L1120 1500", 18],
    ],
    lakes: [
      "M1140 0H1353V205L1300 240L1200 130z",
      "M1353 240L1310 260L1300 380L1330 520L1353 610z",
      "M958 1110l40-15 60 220-20 10z",
      "M610 -15l25-12 12 22-25 12zM640 35l25-12 12 22-25 12zM668 85l25-12 12 22-25 12z",
      "M408 345l10-5 3 12-10 3zM600 1005l15-10 5 10-12 10z",
    ],
    roads: [
      ["M540 0L600 130L580 190L640 350L720 600L760 760L800 850L860 1020L910 1160", 24],
      ["M400 0L410 90L580 190L780 100M410 90L560 0", 14],
      ["M700 150L730 240L860 370L970 500L1060 610L1110 780L1200 1050L1240 1200L1320 1430", 16],
      ["M720 590L940 520L1110 400", 20],
      ["M540 660L620 690L720 715L1060 615L1353 530", 15],
      ["M720 590L600 690", 13],
      ["M540 660C470 680 450 750 400 780L340 820L290 890C220 950 180 970 110 960", 16],
      ["M340 820L500 950L620 1100L760 1200L900 1350L980 1490", 20],
      ["M620 1100L560 1160L410 1240L290 1370L100 1490", 16],
      ["M120 950L200 850L260 770L340 820M100 640L200 850L290 890", 14],
      ["M0 670L100 640M0 1110L110 960M10 680L60 750L120 720", 14],
      ["M0 250L150 580L210 720L260 770", 12],
      ["M940 530L960 640M1310 510L1340 720L1353 930", 14],
      ["M860 0L950 110L1080 240L1110 280M1300 240L1353 210", 14],
      ["M1010 1330C1080 1340 1120 1370 1130 1460", 16],
    ],
    lanes: [
      "M0 380L170 330L360 260M180 170L310 120L400 80M230 100L300 250L380 480M310 120L370 320L375 480M150 320L220 500M260 380L360 340M270 430L370 390M180 440L380 520L640 380M200 250L290 500L350 590M240 540L345 590L450 640L520 680M345 590L320 650L330 740C310 750 320 720 325 730",
      "M350 0L400 150L500 320L550 360C540 430 510 500 520 600M540 460L550 455M440 260L540 330M490 370L540 330M360 570H395M370 680L370 650L305 630M240 700L310 670M100 860L150 900M150 800L220 750",
      "M630 270C680 260 650 320 700 330L730 340M640 290L660 350M650 340L720 330M700 430L740 410L760 520L720 540zM710 460L740 450M710 490L750 480M720 520L760 500M720 240L860 160L940 200M740 80L860 60M780 100L930 190M820 60L930 150M860 370L960 310L1000 400",
      "M770 290L900 260M790 390L910 340L960 430M820 440L940 390M870 310L940 380M960 300L1080 240M800 180L960 100M900 200L1090 130M1000 40L1110 100L1060 150M940 310L970 370M990 440L1050 490M1000 350L1100 300",
      "M580 570L640 530L680 560L690 600L610 640L580 600zM440 770L480 750L470 810L430 800zM480 800L520 830L570 760L600 780M500 820L560 850L590 810M400 820C430 800 440 840 410 850C390 840 400 820 410 820M530 690C560 680 580 700 620 720L600 780M640 740L660 720L680 740L650 760z",
      "M520 680L570 760L610 850M700 760L740 790M830 840L850 920L880 1010L940 1000L900 870L840 880M820 830L860 960M850 900L930 880M860 940L880 960M820 840L870 820M840 800L800 815M910 790L1000 730L1125 880M910 790L930 860L1125 885M970 640L1000 720M1125 880L1350 855M1180 880L1200 900M1120 880L1100 930L1050 920",
      "M1190 600L1220 560L1260 570L1300 640M1200 690L1250 650L1300 700L1280 750L1320 760M1280 860L1290 800M980 620L1040 680M990 600L1020 620M1020 1050L1020 1070L1190 1010L1353 955M1030 1080L1050 1200L1110 1370L1353 1310M1300 980L1353 1130M1020 1040L1040 1055M1210 1110C1230 1080 1280 1110 1270 1150L1240 1160M1260 1230L1353 1200",
      "M690 990L760 920L800 910M700 1020L750 960L830 940M760 1120L750 1060L830 1000M800 870L740 880L680 950M480 960L600 870L590 850M430 960L550 900M330 920L400 980M220 1000L300 940M300 1020C330 980 360 1000 370 1020L320 1070M370 1020L440 1100M440 1100L550 1010M360 1110L340 1120",
      "M110 1200C100 1050 120 1050 260 1030M110 1200L120 1300L140 1400M80 1130L110 1120M130 1280L300 1180M0 1370L90 1330L180 1300M80 1330L130 1450M130 1400L210 1490M0 1000C50 1080 50 1000 20 950M200 1300L240 1350M250 1280L260 1330L300 1380M250 1430L290 1370M0 1380L30 1490",
      "M480 1290L600 1230L660 1290L680 1400M600 1230L590 1180M540 1380L640 1340L760 1370L850 1320M660 1420L780 1300M690 1450L800 1380L830 1400L820 1490M700 1240L820 1330M730 1490L800 1370M400 1270L480 1290C500 1300 480 1320 460 1300M420 1230L470 1200M330 1150L430 1090M370 1130L500 1100L510 1140M780 1370L880 1430",
      "M1240 1250L1353 1220M1150 1160L1230 1140M920 790L880 820M880 740L850 820M850 760L800 790M590 260L640 350M600 200L630 215M780 1060L850 1130M580 440L510 480",
    ],
    trails: ["M470 310L497 300M758 965L805 1005M1265 1455L1310 1430"],
    rails: [["M-20 850L120 960L330 1130L420 1240L520 1360L620 1500", 32], ["M60 900L130 940M240 1050L300 1100M480 1290L560 1400", 8]],
    highways: [["M1010 1330C1080 1380 1100 1430 1055 1490", 16], ["M1135 1455C1200 1475 1300 1465 1353 1440M1060 1490C1160 1475 1260 1480 1353 1475", 26]],
    shields: [["D400", 434, 912]],
    streets: [
      ["Bd d'Austrasie", "M843 -45L930 80L1080 275"],
      ["Rue Saint Dizier", "M-32 245L30 420L150 660"],
      ["Bd Lobau", "M705 625L780 880"],
      ["Rue Marcel Brot", "M1172 1030L1230 1220L1310 1470"],
      ["Quai de la", "M415 1300L640 1640"],
    ],
    areas: [["SAINT-PIERRE", 930, 1200], ["- RENÉ II -", 918, 1258], ["MARCEL BROT", 930, 1316]],
    towns: [["Nancy", 2, 192]],
  },
];

const route =
  "M1414 1182L1352 1030L1291 1060L1271 1055L1224 1084L1201 1077L1157 1027L1134 1030L1109 1022L1069 980L1164 880L1214 855L1307 829L1254 694L1416 580L1351 529L1347 512L1376 472L1419 502L1479 542L1539 557L1609 564L1669 577L1709 602L1752 642L1846 517L1959 627L1934 702L1989 762L2041 829L2024 867L1991 879L1989 902L2009 1067L1814 1154L1804 1162L1591 1257L1627 1327L1514 1385C1420 1350 1360 1420 1385 1480M1340 1372h12M1470 1240L1294 1302L1331 1372L1429 1577L1514 1755L1591 1717L1529 1617L1499 1517";

// The fifth stop lies under the sixth, so only its pin is drawn.
const pins = [
  ["3", 1710, 555],
  ["4", 1989, 762],
  ["2", 1471, 1270],
  ["1", 1362, 1341],
  ["", 1476, 1519],
  ["6", 1445, 1549],
];

const MapSvg = styled.svg`
  font-family: Roboto, "Noto Sans", sans-serif;

  text {
    paint-order: stroke;
    stroke: #fff;
    stroke-width: 9px;
    stroke-linejoin: round;
  }
  .street {
    font-size: 54px;
  }
  .river {
    font-size: 58px;
    stroke: none;
  }
  .area {
    font-size: 58px;
    font-weight: 500;
    letter-spacing: 6px;
  }
  .town {
    font-size: 80px;
    font-weight: 500;
  }
  .shield {
    font-size: 45px;
    stroke: none;
  }
  .pin {
    font-family: "Liberation Sans", sans-serif;
    font-size: 75px;
    font-weight: 700;
    stroke: none;
  }
`;

const Layer = ({ of, children }) => (
  <>
    {tiles.map((tile, i) => (
      <g key={i} transform={`translate(${tile.at[0]} ${tile.at[1]})`}>
        {(tile[of] || []).map((item, j) => children(item, `${of}-${i}-${j}`))}
      </g>
    ))}
  </>
);

const Fill = ({ of, color }) => <Layer of={of}>{(d, key) => <path key={key} d={d} fill={color} />}</Layer>;

const Lines = ({ of, color }) => (
  <Layer of={of}>
    {([d, width], key) => <path key={key} d={d} stroke={color} strokeWidth={width} fill="none" strokeLinejoin="round" />}
  </Layer>
);

const Thin = ({ of, color, width, dash }) => (
  <Layer of={of}>
    {(d, key) => (
      <path key={key} d={d} stroke={color} strokeWidth={width} strokeDasharray={dash} fill="none" strokeLinejoin="round" />
    )}
  </Layer>
);

const CityMap = () => (
  <MapSvg viewBox="0 0 2772 2775" preserveAspectRatio="xMinYMin slice" role="img" aria-label="Nancy">
    <Fill of="parks" color="#cbeed6" />
    <Fill of="woods" color="#bfe9cc" />
    <Fill of="plain" color="#f5f4f5" />
    <Fill of="shops" color="#f7efdf" />
    <Fill of="clinics" color="#f9e8e5" />
    <Thin of="paths" color="#9fd8b8" width={4} />
    <Thin of="lanes" color="#d9e0e6" width={6} />
    <Thin of="trails" color="#7cc79a" width={3} dash="24 8" />
    <Lines of="water" color="#a0d7ea" />
    <Fill of="lakes" color="#a0d7ea" />
    <Fill of="islands" color="#cbeed6" />
    <Fill of="yards" color="#d2d3d5" />
    <Lines of="roads" color="#d6dee4" />
    <Lines of="rails" color="#d2d3d5" />
    <Lines of="highways" color="#8fa3bf" />
    <circle cx="2754" cy="2747" r="38" fill="#8fa3bf" />
    <circle cx="2754" cy="2747" r="23" fill="#f5f4f5" />
    <path d="M1360 1602L1434 1754M1519 1920L1675 1847" stroke="#8fa3bf" strokeWidth="5" />
    <path d="M0 2060h11v54H0z" fill="#f9db5d" stroke="#ddb84e" strokeWidth="4" />

    <Layer of="shields">
      {([text, x, y], key) => (
        <g key={key}>
          <rect x={x - (text.length * 12 + 19)} y={y - 27} width={text.length * 24 + 38} height="54" fill="#f9db5d" stroke="#ddb84e" strokeWidth="4" />
          <text className="shield" x={x} y={y + 16} textAnchor="middle" fill="#3f3a22">{text}</text>
        </g>
      )}
    </Layer>
    <Layer of="streets">
      {([text, d, color], key) => (
        <g key={key}>
          <path id={key} d={d} fill="none" />
          <text className={color ? "river" : "street"} fill={color || "#3b475c"}>
            <textPath href={`#${key}`}>{text}</textPath>
          </text>
        </g>
      )}
    </Layer>
    <Layer of="areas">
      {([text, x, y, anchor], key) => (
        <text key={key} className="area" x={x} y={y} textAnchor={anchor || "middle"} fill="#36383e">{text}</text>
      )}
    </Layer>
    <Layer of="towns">
      {([text, x, y], key) => (
        <text key={key} className="town" x={x} y={y} fill="#26282d">{text}</text>
      )}
    </Layer>

    <g transform="translate(956 1639)">
      <circle r="33" fill="#54657a" stroke="#fff" strokeWidth="3" />
      <path d="M-14 -17h28v27h-28zM-11 12l-5 7M11 12l5 7" fill="#fff" stroke="#fff" strokeWidth="4" />
      <path d="M-11 -12h9v10h-9zM3 -12h9v10h-9zM-10 5h4M6 5h4" fill="#54657a" stroke="#54657a" strokeWidth="2" />
    </g>

    <path d={route} fill="none" stroke="#6b35e8" strokeWidth="13" strokeLinejoin="round" />
    {pins.map(([label, x, y]) => (
      <g key={`${x}-${y}`} transform={`translate(${x} ${y})`}>
        <path d="M0 0C-20 -28 -57 -54 -57 -90A57 57 0 1 1 57 -90C57 -54 20 -28 0 0z" fill="#6f2cf5" stroke="#120a2a" strokeWidth="5" />
        {label && <text className="pin" y="-56" textAnchor="middle" fill="#fff">{label}</text>}
      </g>
    ))}
  </MapSvg>
);

/* ---------- page ---------- */

const leftNav = [
  ["calendar", "Planifier"],
  ["gauge", "Organiser"],
  ["sign", "Suivre"],
  ["chart", "Analyser"],
];

const rightNav = [
  ["clients", "Clients"],
  ["resources", "Ressources"],
  ["gear", "Paramètres"],
];

const sideNav = [
  ["planning", "Planning", 30],
  ["road", "Liste des tournées", 38],
  ["mapPin", "Carte des tournées", 32],
  ["checklist", "Liste des livraisons", 32],
];

const menu = [
  ["zoomIn", "Plus de détails"],
  ["card", "Afficher la fiche client"],
  ["planning", "Confirmer cette livraison"],
  ["history", "Reprogrammer"],
  ["cart", "Mettre au panier"],
  ["hourglass", "Mettre en attente"],
  ["minusCircle", "Déplanifier"],
  ["move", "Repositionner"],
  ["copy", "Dupliquer"],
  ["file", "Générer"],
];

const Attachments = () => (
  <div>
    <b>Pièces jointes</b>
    <AddFile aria-label="Ajouter une pièce jointe">
      <Icon name="plusCircle" size={33} />
    </AddFile>
  </div>
);

const Stop = ({ number, name, address, phoneLabel, phone }) => (
  <Card>
    <CardHead>
      <Badge>{number}</Badge>
      <div>
        <Name>{name}</Name>
        <Address>
          <b>Adresse :</b> {address}
        </Address>
      </div>
    </CardHead>
    <CardBody>
      <Section $first>
        <SectionTitle>CLIENT</SectionTitle>
        <Columns>
          <div>
            <p>
              <b>{phoneLabel}</b> : <a href={`tel:${phone}`}>{phone}</a>
            </p>
            <p>
              <b>Horaires d'ouverture :</b> Toujours ouvert
            </p>
          </div>
          <Attachments />
        </Columns>
      </Section>
      <Section>
        <SectionTitle>LIVRAISON</SectionTitle>
        <Columns>
          <div>
            <p><b>Durée</b> : 40min</p>
            <p><b>Créneau horaire :</b> 08:00-17:00</p>
            <p><b>Livreur affecté :</b></p>
            <Driver><Dot $size={17} /> Julia Fernandez</Driver>
          </div>
          <Attachments />
        </Columns>
      </Section>
    </CardBody>
  </Card>
);

const App = () => {
  const [date, setDate] = useState("13/03/2025");
  return (
    <>
      <GlobalStyle />
      <Frame>
        <Header>
          <Group>
            <Logo href="#">
              <svg viewBox="0 0 38 38" aria-hidden="true">
                <defs>
                  <linearGradient id="ring" x1="0" y1="0" x2="1" y2="0.3">
                    <stop offset="0" stopColor="#55b4f5" />
                    <stop offset="0.5" stopColor="#2b50d8" />
                    <stop offset="1" stopColor="#6a3cf0" />
                  </linearGradient>
                </defs>
                <path d="M34 34V19A15 15 0 1 0 19 34z" fill="none" stroke="url(#ring)" strokeWidth="7" />
                <path d="M4 19A15 15 0 0 0 22 34" fill="none" stroke="#1a1fe0" strokeWidth="7" />
                <path d="M22 30h12v7H25z" fill="#3d7bf2" />
              </svg>
              <span><b>Ants</b>Route</span>
            </Logo>
            <SelectLabel htmlFor="depot">Entrepôt</SelectLabel>
            <SelectBox $width={214}>
              <Select id="depot" defaultValue="Hayange">
                <option>Hayange</option>
              </Select>
            </SelectBox>
          </Group>
          <Group as="nav" $gap={8}>
            {leftNav.map(([icon, label]) => (
              <NavLink key={label} href="#" $active={label === "Organiser"}>
                <Icon name={icon} size={30} /> {label}
              </NavLink>
            ))}
          </Group>
          <Group>
            <Group as="nav" $gap={8}>
              {rightNav.map(([icon, label]) => (
                <NavLink key={label} href="#" $tight>
                  <Icon name={icon} size={32} /> {label}
                </NavLink>
              ))}
            </Group>
            <HeaderTools $gap={39}>
              <IconButton aria-label="Rechercher">
                <Icon name="search" />
              </IconButton>
              <IconButton aria-label="Notifications">
                <Icon name="bell" />
              </IconButton>
            </HeaderTools>
            <Avatar>CJ</Avatar>
          </Group>
        </Header>

        <Body>
          <Sidebar>
            {sideNav.map(([icon, label, size]) => (
              <SideLink key={label} href="#" $active={icon === "road"}>
                <SideIcon>
                  <Icon name={icon} size={size} />
                </SideIcon>
                {label}
              </SideLink>
            ))}
          </Sidebar>

          <Main>
            <Collapse aria-label="Réduire le menu">
              <Icon name="left" size={24} />
            </Collapse>
            <Toolbar>
              <Group $gap={26}>
                <PageTitle>Tournées</PageTitle>
                <SelectBox $width={161}>
                  <Select aria-label="Période" defaultValue="Jour">
                    <option>Jour</option>
                  </Select>
                </SelectBox>
                <DateGroup>
                  <IconButton aria-label="Calendrier">
                    <Icon name="calendar" size={30} />
                  </IconButton>
                  <IconButton aria-label="Jour précédent">
                    <Icon name="left" size={20} />
                  </IconButton>
                  <DateInput aria-label="Date" value={date} onChange={(e) => setDate(e.target.value)} />
                  <IconButton aria-label="Jour suivant">
                    <Icon name="right" size={20} />
                  </IconButton>
                </DateGroup>
              </Group>
              <Group $gap={10}>
                <Primary>
                  <Icon name="rocket" size={32} /> Ré-optimiser les tournées
                </Primary>
                <Round aria-label="Ajouter">
                  <Icon name="plus" size={27} />
                </Round>
                <Round $green aria-label="Télécharger">
                  <Icon name="cloud" size={30} />
                </Round>
                <Round $green aria-label="Verrouiller">
                  <Icon name="lock" size={28} />
                </Round>
                <Round aria-label="Envoyer">
                  <Icon name="mail" size={30} />
                </Round>
              </Group>
            </Toolbar>

            <RouteView>
              <RouteHead>
                <Group $gap={11}>
                  <RouteTitle>Tournée - Julia Fernandez</RouteTitle>
                  <Dot $size={32} />
                  <IconButton aria-label="Tournée suivante">
                    <Icon name="arrowCircle" size={33} />
                  </IconButton>
                </Group>
                <Close aria-label="Fermer">
                  <Icon name="close" size={16} stroke={3} />
                </Close>
              </RouteHead>
              <Split>
                <MapPane>
                  <CityMap />
                  <ZoomControl>
                    <IconButton aria-label="Zoom avant">
                      <Icon name="plus" size={32} stroke={4} />
                    </IconButton>
                    <IconButton aria-label="Zoom arrière">
                      <Svg viewBox="0 0 32 32" $stroke={4}>
                        <path d="M3 16h26" />
                      </Svg>
                    </IconButton>
                  </ZoomControl>
                </MapPane>
                <List>
                  <Options>
                    <Icon name="funnel" size={16} stroke={3} /> Voir les options d'affichage
                  </Options>
                  <Departure>
                    <Icon name="flag" size={32} />
                    <div>
                      <p><b>Heure prévue de début de tournée :</b> 13/03/2025 08:00</p>
                      <p>
                        <b>Départ du lieu de stationnement du véhicule :</b> 5 Rue Saint-Georges, Nancy, France
                      </p>
                    </div>
                  </Departure>
                  <Stop
                    number={1}
                    name="John Dubois"
                    address="20 RUE STANISLAS 54000 NANCY"
                    phoneLabel="Téléphone mobile"
                    phone="+33 6 12 34 56 78"
                  />
                  <Stop
                    number={2}
                    name="Tom MALIK"
                    address="15 place stanislas 54000 Nancy"
                    phoneLabel="Téléphone"
                    phone="33612750088"
                  />
                </List>
                <Track />
              </Split>
              <Menu>
                {menu.map(([icon, label]) => (
                  <MenuItem key={label} $marked={icon === "move"} $more={icon === "file"}>
                    <button>
                      <Icon name={icon} size={21} />
                      {label}
                      {icon === "file" && <Caret />}
                    </button>
                    {icon === "move" && <Step>5</Step>}
                  </MenuItem>
                ))}
              </Menu>
            </RouteView>
          </Main>
        </Body>
      </Frame>
    </>
  );
};

export default App;
